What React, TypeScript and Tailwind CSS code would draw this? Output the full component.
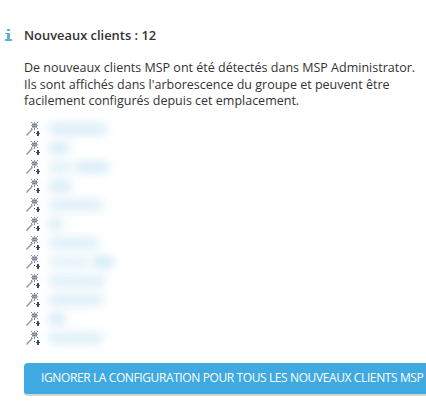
const rows = [
  [[60, 0.55]],
  [[22, 0.6]],
  [[24, 0.45], [36, 0.6]],
  [[24, 0.6]],
  [[56, 0.5]],
  [[15, 0.65]],
  [[52, 0.5]],
  [[42, 0.4], [22, 0.7]],
  [[58, 0.5]],
  [[56, 0.5]],
  [[18, 0.65]],
  [[56, 0.5]],
] as [number, number][][];

function Info() {
  return (
    <svg width="8" height="12" viewBox="0 0 8 12" className="block" shapeRendering="crispEdges">
      <g fill="#5fb0d8">
        <rect x="3" y="0" width="3" height="2" />
        <rect x="1" y="4" width="5" height="1" />
        <rect x="3" y="5" width="3" height="5" />
        <rect x="1" y="10" width="7" height="2" />
      </g>
    </svg>
  );
}

function Wand() {
  return (
    <svg width="14" height="14" viewBox="0 0 14 14" className="shrink-0" shapeRendering="crispEdges">
      <g fill="#7c8695">
        <rect x="5" y="0" width="1" height="1" />
        <rect x="8" y="0" width="1" height="2" />
        <rect x="11" y="0" width="1" height="1" />
        <rect x="6" y="1" width="5" height="1" fill="#b4bbc5" />
        <rect x="6" y="2" width="5" height="1" />
        <rect x="5" y="3" width="7" height="1" fill="#a0a8b3" />
        <rect x="6" y="4" width="5" height="1" />
        <rect x="6" y="5" width="5" height="1" fill="#b4bbc5" />
        <rect x="5" y="6" width="1" height="1" />
        <rect x="8" y="6" width="1" height="2" />
        <rect x="11" y="6" width="1" height="1" />
        <rect x="8" y="10" width="1" height="1" fill="#3f4b5c" />
        <rect x="11" y="9" width="2" height="5" fill="#3f4b5c" />
        <rect x="10" y="11" width="5" height="1" fill="#3f4b5c" />
      </g>
      <path d="M0.5 13.5 L6.5 7" stroke="#8a929e" strokeWidth="1.2" fill="none" shapeRendering="auto" />
    </svg>
  );
}

export default function App() {
  return (
    <div className="w-[426px] h-[418px] bg-white overflow-hidden text-[#333] font-['Open_Sans',sans-serif]">
      <div className="flex items-start pt-[25px]">
        <div className="w-[24px] shrink-0 pl-[4px] pt-[4px]"><Info /></div>
        <div className="flex-1 min-w-0">
          <div className="text-[12.9px] leading-[20px] font-semibold">Nouveaux clients : 12</div>
          <div className="mt-[15px] text-[12.5px] leading-[16.5px] whitespace-nowrap">
            <p>De nouveaux clients MSP ont été détectés dans MSP Administrator.</p>
            <p>Ils sont affichés dans l'arborescence du groupe et peuvent être</p>
            <p>facilement configurés depuis cet emplacement.</p>
          </div>
          <div className="mt-[10px] flex flex-col">
            {rows.map((blobs, i) => (
              <div key={i} className="h-[19px] flex items-center">
                <div className="ml-[2px]"><Wand /></div>
                <div className="ml-[8px] flex gap-[2px]">
                  {blobs.map(([w, o], j) => (
                    <div key={j} className="h-[12px] rounded-full bg-[#bfe0f2] blur-[5px]" style={{ width: w, opacity: o }} />
                  ))}
                </div>
              </div>
            ))}
          </div>
          <div className="mt-[15px] h-[33px] w-[420px] flex items-center pl-[17px] bg-[#3fa9e1] rounded-l-[4px] border-b-[2px] border-[#d4d4d4] text-white text-[12px] tracking-[-0.39px] whitespace-nowrap overflow-hidden">
            IGNORER LA CONFIGURATION POUR TOUS LES NOUVEAUX CLIENTS MSP
          </div>
        </div>
      </div>
    </div>
  );
}
